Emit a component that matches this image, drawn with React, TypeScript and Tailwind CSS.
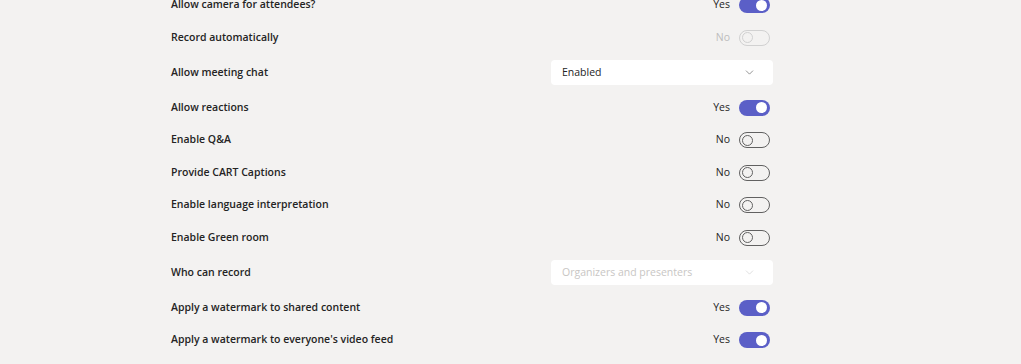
import { ChevronDown } from 'lucide-react';

type Row =
    | { kind: 'toggle'; label: string; on: boolean; disabled?: boolean }
    | { kind: 'select'; label: string; value: string; disabled?: boolean };

const rows: Row[] = [
    { kind: 'toggle', label: 'Allow camera for attendees?', on: true },
    { kind: 'toggle', label: 'Record automatically', on: false, disabled: true },
    { kind: 'select', label: 'Allow meeting chat', value: 'Enabled' },
    { kind: 'toggle', label: 'Allow reactions', on: true },
    { kind: 'toggle', label: 'Enable Q&A', on: false },
    { kind: 'toggle', label: 'Provide CART Captions', on: false },
    { kind: 'toggle', label: 'Enable language interpretation', on: false },
    { kind: 'toggle', label: 'Enable Green room', on: false },
    { kind: 'select', label: 'Who can record', value: 'Organizers and presenters', disabled: true },
    { kind: 'toggle', label: 'Apply a watermark to shared content', on: true },
    { kind: 'toggle', label: "Apply a watermark to everyone's video feed", on: true },
];

function Toggle({ on, disabled }: { on: boolean; disabled?: boolean }) {
    if (on) {
        return (
            <div className="w-[31px] h-[16px] rounded-full bg-[#5b5fc7] flex items-center justify-end px-[3px]">
                <div className="w-[11px] h-[11px] rounded-full bg-white" />
            </div>
        );
    }
    return (
        <div
            className={`w-[31px] h-[16px] rounded-full border flex items-center px-[2px] ${
                disabled ? 'border-[#d1d1d1]' : 'border-[#616161]'
            }`}
        >
            <div
                className={`w-[11px] h-[11px] rounded-full border ${
                    disabled ? 'border-[#d1d1d1]' : 'border-[#616161]'
                }`}
            />
        </div>
    );
}

export default function App() {
    return (
        <div
            className="w-[1021px] h-[364px] overflow-hidden bg-[#f3f2f1] text-[#242424]"
            style={{ fontFamily: '"Open Sans", "Noto Sans", sans-serif' }}
        >
            <div className="ml-[171px] w-[602px] -mt-[5px] flex flex-col gap-[12.5px]">
                {rows.map((row) =>
                    row.kind === 'toggle' ? (
                        <div key={row.label} className="h-5 flex items-center justify-between">
                            <span className="text-[10.5px] font-semibold">{row.label}</span>
                            <div className="flex items-center gap-[9px] mr-[3px]">
                                <span
                                    className={`text-[10.5px] ${
                                        row.disabled ? 'text-[#bdbdbd]' : 'text-[#242424]'
                                    }`}
                                >
                                    {row.on ? 'Yes' : 'No'}
                                </span>
                                <Toggle on={row.on} disabled={row.disabled} />
                            </div>
                        </div>
                    ) : (
                        <div key={row.label} className="h-[25px] flex items-center justify-between">
                            <span className="text-[10.5px] font-semibold">{row.label}</span>
                            <div className="w-[222px] h-[25px] bg-white rounded-[4px] flex items-center justify-between pl-[11px] pr-[17px]">
                                <span
                                    className={`text-[10.5px] ${
                                        row.disabled ? 'text-[#c8c6c4]' : 'text-[#242424]'
                                    }`}
                                >
                                    {row.value}
                                </span>
                                <ChevronDown
                                    className={`w-[13px] h-[13px] ${
                                        row.disabled ? 'text-[#d1d1d1]' : 'text-[#616161]'
                                    }`}
                                    strokeWidth={1.25}
                                />
                            </div>
                        </div>
                    )
                )}
            </div>
        </div>
    );
}
